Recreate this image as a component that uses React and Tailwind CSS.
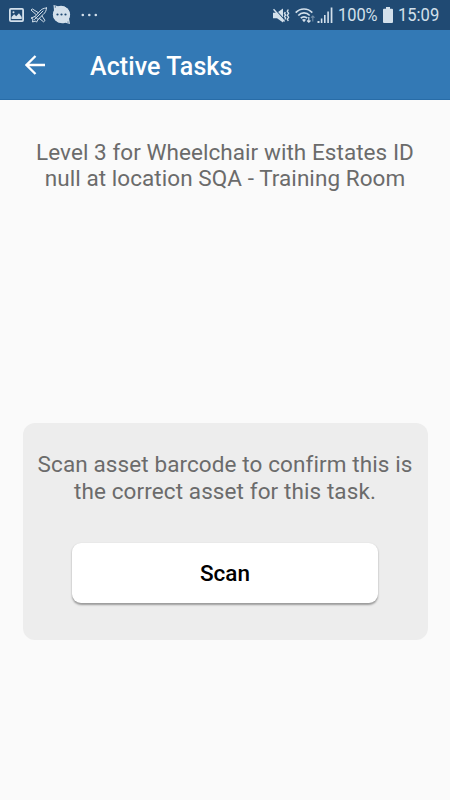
function PictureIcon() {
  return (
    <svg className="ml-[9px] h-[14px] w-[15px]" viewBox="0 0 15 14">
      <rect x=".9" y=".9" width="13.2" height="12.2" rx="1" fill="none" stroke="currentColor" strokeWidth="1.800" />
      <path d="M2.500 11V9l2.700-2.700 2 2L10 5.200l2.700 3.800v2z" fill="currentColor" />
      <circle cx="4.500" cy="4.200" r="1" fill="currentColor" />
    </svg>
  );
}

function RocketIcon() {
  return (
    <svg className="ml-1.5 h-4 w-[18px]" viewBox="0 0 18 16" fill="none" stroke="currentColor" strokeWidth="1" strokeLinejoin="round" strokeLinecap="round">
      <path d="M16.500 1c-3 .1-5 1.200-6.600 3.100L5 9.500l3 3 5.200-5c2-1.800 3.200-3.700 3.300-6.500z" />
      <path d="M8 5.500 2.500 2 1 3l5 4.500M12 9l3 4.500-1.500 1.300L9.500 11.500M5 9.500 1 11l2 1-.5 3 3-1 1 1.200L8 12.500M4.500 12.500 13 4" />
    </svg>
  );
}

function ChatIcon() {
  return (
    <svg className="ml-1 h-[22px] w-[19px]" viewBox="0 0 19 22">
      <path d="M1.500 1 6 2.300A9 9 0 0 1 17 14.500L18 20l-4.700-1.300A9 9 0 0 1 2 6.500z" fill="currentColor" />
      <circle cx="9.500" cy="10.500" r="8.600" fill="currentColor" />
      <g fill="#204a73">
        <circle cx="5.500" cy="10.500" r="1.100" />
        <circle cx="9.500" cy="10.500" r="1.100" />
        <circle cx="13.500" cy="10.500" r="1.100" />
        <circle cx="3.300" cy="2.900" r=".6" />
        <circle cx="16" cy="18" r=".6" />
      </g>
    </svg>
  );
}

function MoreDots() {
  return (
    <svg className="ml-2.5 h-1 w-[17px]" viewBox="0 0 17 4" fill="currentColor">
      <circle cx="1.800" cy="2" r="1.300" />
      <circle cx="8.300" cy="2" r="1.300" />
      <circle cx="14.800" cy="2" r="1.300" />
    </svg>
  );
}

function MutedIcon() {
  return (
    <svg className="h-[15px] w-[17px]" viewBox="0 0 17 15">
      <path d="M0 4.800h4L10 .600v13.800l-6-4.200H0z" fill="currentColor" />
      <path d="M1.500.800 12 12.300" stroke="#204a73" strokeWidth="1.200" />
      <path d="M.500 1.200 11.500 13.500" stroke="currentColor" strokeWidth="1.500" />
      <path d="m12.300 4-.8 1.500 1.100 1.500-1.100 1.500 1.100 1.500-.8 1.500M15.300 1.500l-1 1.800 1.300 2-1.300 2 1.300 2-1.300 2 1 1.700" fill="none" stroke="currentColor" strokeWidth="1.400" />
    </svg>
  );
}

function WifiIcon() {
  return (
    <svg className="ml-[5px] h-[17px] w-5" viewBox="0 0 20 17" fill="none" stroke="currentColor">
      <path d="M.700 5.600c4.600-4.800 12-4.800 16.600 0M3.300 8.500c3.200-3.400 8.200-3.400 11.400 0M5.800 11.200c1.800-1.900 4.600-1.900 6.400 0" strokeWidth="1.700" />
      <path d="m9 15.300-2-2.600q2-1.400 4 0z" fill="currentColor" stroke="none" />
      <path d="M13.800 10v5.200m-1.700-1.700 1.700 1.700 1.700-1.700" strokeWidth="1.200" />
      <path d="M17.800 14.500V9m-1.700 1.700L17.800 9l1.700 1.700" strokeWidth="1.100" opacity=".45" />
    </svg>
  );
}

function SignalIcon() {
  return (
    <svg className="ml-0.5 h-4 w-4" viewBox="0 0 16 16" fill="currentColor">
      <path d="M.500 14h2v2h-2zM3.800 11.500h1.600V16H3.800zM7 8h1.600v8H7zM10.300 4.500h1.600V16h-1.600zM13.700.500h1.700V16h-1.700z" />
    </svg>
  );
}

function StatusBar() {
  return (
    <header className="flex h-[30px] items-center bg-[#204a73] text-[#d3e0eb]">
      <PictureIcon />
      <RocketIcon />
      <ChatIcon />
      <MoreDots />
      <div className="ml-auto flex items-center pr-[11px] text-[18px] leading-[30px]">
        <MutedIcon />
        <WifiIcon />
        <SignalIcon />
        <span className="ml-[5px] w-[41px] origin-left scale-x-[0.91] whitespace-nowrap">100%</span>
        <svg className="ml-1 h-4 w-[10px]" viewBox="0 0 10 16">
          <path d="M3 0h4v1.700h2q1 0 1 1V15q0 1-1 1H1q-1 0-1-1V2.700q0-1 1-1h2z" fill="currentColor" />
        </svg>
        <span className="ml-[5px] w-[41px] origin-left scale-x-[0.92] whitespace-nowrap">15:09</span>
      </div>
    </header>
  );
}

export default function App() {
  return (
    <div className="flex h-[800px] w-[450px] flex-col overflow-hidden bg-[#fafafa] font-['Roboto',sans-serif]">
      <StatusBar />
      <nav className="flex h-[70px] shrink-0 items-center border-b border-[#286ca7] bg-[#3379b5] text-white">
        <svg className="ml-[25px] h-5 w-5" viewBox="0 0 20 20" fill="none" stroke="currentColor" strokeWidth="2.300">
          <path d="M20 10H2M10.500 1 1.500 10l9 9" />
        </svg>
        <h1 className="ml-[45px] pt-[5px] text-[25px] leading-[30px] font-medium tracking-[0.08px]">Active Tasks</h1>
      </nav>
      <main className="flex flex-col items-center text-center text-[22.5px] leading-[26.4px] text-[#6b6b6b]">
        <p className="mt-[38.500px] whitespace-nowrap tracking-[0.06px]">
          Level 3 for Wheelchair with Estates ID
          <br />
          null at location SQA - Training Room
        </p>
        <section className="mt-[231.500px] flex h-[217px] w-[405px] flex-col items-center rounded-[12px] bg-[#ededed]">
          <p className="mt-[28.500px] whitespace-nowrap tracking-[0.1px]">
            Scan asset barcode to confirm this is
            <br />
            the correct asset for this task.
          </p>
          <button className="mt-[38.500px] h-[60px] w-[306px] rounded-[9px] bg-white pt-px font-medium text-black shadow-[0_1.500px_2px_rgba(0,0,0,0.35)]">
            Scan
          </button>
        </section>
      </main>
    </div>
  );
}
